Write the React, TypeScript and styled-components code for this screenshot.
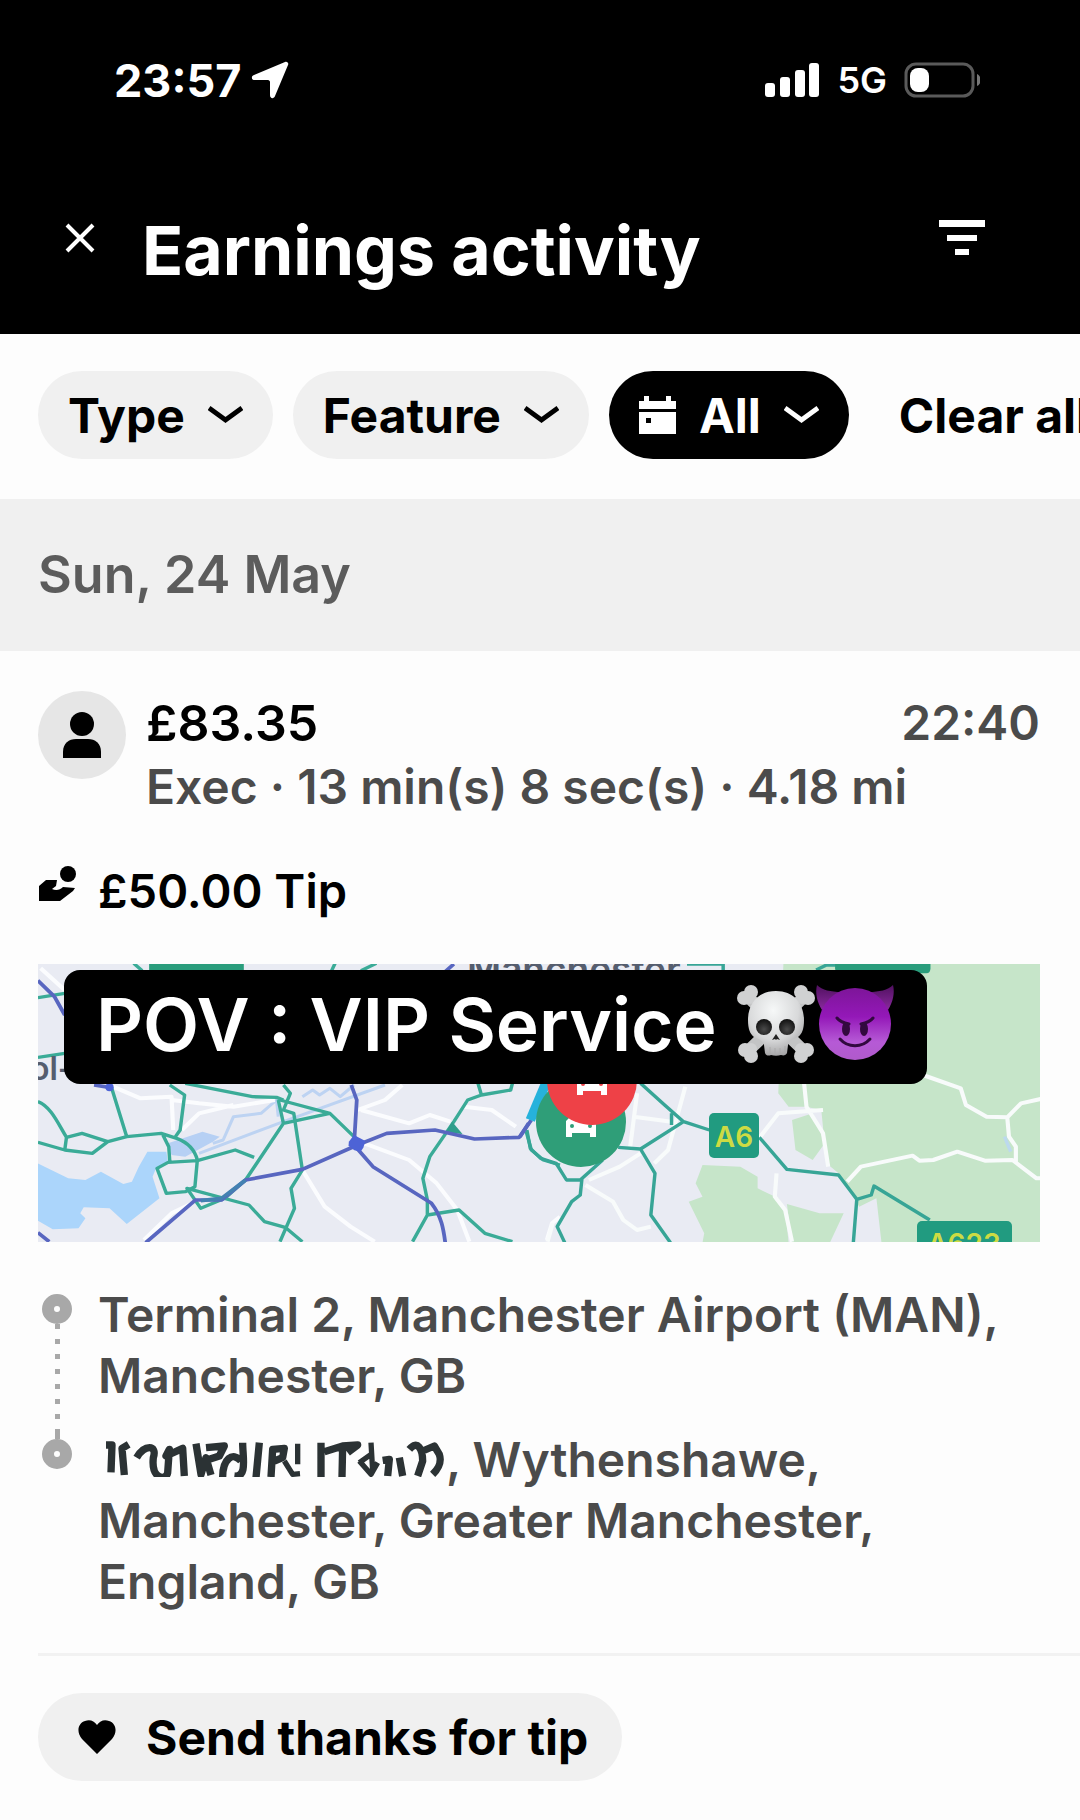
import React from "react";
import styled, { createGlobalStyle, css } from "styled-components";

const Global = createGlobalStyle`
  *, *::before, *::after { box-sizing: border-box; }
  body {
    margin: 0;
    background: #fdfdfd;
    color: #000;
    font-family: Inter, "Liberation Sans", sans-serif;
  }
  button { font: inherit; color: inherit; border: 0; margin: 0; padding: 0; background: none; cursor: pointer; }
  svg { display: block; flex: none; }
`;

const Screen = styled.div`
  min-height: 100vh;
  overflow: hidden;
`;

const Header = styled.header`
  background: #000;
  color: #fff;
`;

const StatusBar = styled.div`
  display: flex;
  align-items: center;
  justify-content: space-between;
  height: 160px;
  padding: 0 100px 0 114px;
`;

const StatusGroup = styled.div<{ $gap: number }>`
  display: flex;
  align-items: center;
  gap: ${(p) => p.$gap}px;
`;

const Clock = styled.time`
  font-size: 45px;
  font-weight: 700;
`;

const Network = styled.span`
  font-size: 36px;
  font-weight: 600;
`;

const TitleBar = styled.div`
  display: flex;
  align-items: flex-start;
  gap: 34px;
  height: 174px;
  padding: 50px 90px 0 52px;
`;

const Title = styled.h1`
  flex: 1;
  margin: 0;
  font-size: 68px;
  font-weight: 700;
  line-height: 80px;
  white-space: nowrap;
`;

const IconButton = styled.button`
  display: flex;
  align-items: center;
  justify-content: center;
  width: 56px;
  height: 56px;
`;

const Filters = styled.nav`
  display: flex;
  gap: 20px;
  padding: 37px 0 40px 38px;
  white-space: nowrap;
`;

const pill = css`
  display: flex;
  flex: none;
  align-items: center;
  height: 88px;
  padding: 0 30px;
  border-radius: 44px;
  font-size: 48px;
  font-weight: 700;
`;

const Chip = styled.button<{ $active?: boolean }>`
  && {
    ${pill}
    gap: 23px;
    background: ${(p) => (p.$active ? "#000" : "#f0f0f0")};
    color: ${(p) => (p.$active ? "#fff" : "#000")};
  }
`;

const ClearButton = styled.button`
  && {
    ${pill}
  }
`;

const DayHeading = styled.h2`
  margin: 0;
  padding: 0 38px;
  background: #f0f0f0;
  color: #5c5c5c;
  font-size: 52px;
  font-weight: 600;
  line-height: 152px;
`;

const Trip = styled.article`
  padding: 40px 40px 41px 38px;
`;

const TripRow = styled.div`
  display: flex;
  gap: 20px;
`;

const Avatar = styled.div`
  display: flex;
  flex: none;
  align-items: center;
  justify-content: center;
  width: 88px;
  height: 88px;
  border-radius: 50%;
  background: #e6e6e6;
`;

const TripText = styled.div`
  flex: 1;
  font-size: 48px;
  line-height: 64px;
  font-weight: 600;
  color: #4b4b4b;
`;

const TripTop = styled.div`
  display: flex;
  justify-content: space-between;
`;

const Fare = styled.strong`
  font-size: 50px;
  font-weight: 600;
  color: #000;
`;

const Detail = styled.p`
  margin: 0;
  white-space: nowrap;
`;

const Tip = styled.div`
  display: flex;
  align-items: flex-start;
  gap: 22px;
  margin: 40px 0 41px;
  font-size: 47px;
  font-weight: 600;
  line-height: 64px;
`;

const TipIcon = styled.span`
  display: flex;
  align-items: center;
  height: 50px;
`;

const MapFrame = styled.figure`
  position: relative;
  margin: 0 0 42px;
  svg.map { width: 100%; height: 278px; }
`;

const Caption = styled.figcaption`
  position: absolute;
  left: 26px;
  top: 6px;
  display: flex;
  align-items: center;
  height: 114px;
  padding: 0 32px 6px;
  border-radius: 16px;
  background: #000;
  color: #fff;
  font-size: 73px;
  font-weight: 600;
  white-space: nowrap;
`;

const CaptionText = styled.span`
  margin-right: 20px;
`;

const Route = styled.ol`
  list-style: none;
  margin: 0;
  padding: 0;
  color: #4b4b4b;
  font-size: 48px;
  font-weight: 600;
  line-height: 61px;
`;

const Stop = styled.li`
  display: flex;
  gap: 22px;
  &:not(:last-child) > :last-child { padding-bottom: 23px; }
`;

const Track = styled.div`
  display: flex;
  flex: none;
  flex-direction: column;
  align-items: center;
  width: 38px;
`;

const Stem = styled.div<{ $visible: boolean }>`
  width: 5px;
  height: 10px;
  background: ${(p) => (p.$visible ? "#a8a8a8" : "transparent")};
`;

const Ring = styled.div`
  width: 30px;
  height: 30px;
  border: 12px solid #a8a8a8;
  border-radius: 50%;
`;

const Dots = styled.div`
  flex: 1;
  width: 5px;
  background: repeating-linear-gradient(#a8a8a8 0 5px, transparent 5px 15px);
`;

const Address = styled.p`
  flex: 1;
  margin: 0;
`;

const Scribble = styled.svg`
  && { display: inline-block; vertical-align: baseline; }
`;

const Divider = styled.hr`
  margin: 0 0 37px 38px;
  border: 0;
  height: 3px;
  background: #f2f2f2;
`;

const ThanksButton = styled.button`
  && {
    ${pill}
    gap: 30px;
    margin: 0 38px;
    padding: 0 34px 0 40px;
    background: #f0f0f0;
  }
`;

const Chevron = () => (
  <svg width="35" height="20" viewBox="0 0 35 20" fill="none" stroke="currentColor" strokeWidth="5">
    <path d="M1 3 17.500 15 34 3" />
  </svg>
);

const SKULL_BONES = "M12 14 66 66M66 14 12 66";

function Skull() {
  return (
    <svg width="78" height="80" viewBox="0 0 78 80" role="img" aria-label="Skull and crossbones">
      <defs>
        <radialGradient id="bone" cx=".45" cy=".3" r=".75">
          <stop offset="0" stopColor="#f6f8f8" />
          <stop offset=".6" stopColor="#d8d9da" />
          <stop offset="1" stopColor="#9d9c9e" />
        </radialGradient>
        <radialGradient id="socket" cx=".5" cy=".65" r=".6">
          <stop offset="0" stopColor="#4a4a4a" />
          <stop offset="1" stopColor="#141414" />
        </radialGradient>
      </defs>
      <path d={SKULL_BONES} stroke="#c3c4c5" strokeWidth="12" />
      <g fill="#d0d1d2">
        <circle cx="7" cy="14" r="7" /><circle cx="14" cy="8" r="7" /><circle cx="13" cy="14" r="6" />
        <circle cx="71" cy="14" r="7" /><circle cx="64" cy="8" r="7" /><circle cx="65" cy="14" r="6" />
        <circle cx="8" cy="66" r="7" /><circle cx="14" cy="72" r="7" /><circle cx="14" cy="65" r="6" />
        <circle cx="70" cy="66" r="7" /><circle cx="64" cy="72" r="7" /><circle cx="64" cy="65" r="6" />
      </g>
      <path fill="url(#bone)" d="M39 7C21 7 11 20 11 36c0 9 2 14 6 17 4 2 9 3 10 8l1 8c1 3 4 3 6 2 3 1 7 1 10 0 3 1 5 0 6-2l1-8c1-5 6-6 10-8 4-3 6-8 6-17C67 20 57 7 39 7Z" />
      <path fill="none" stroke="#aaa" strokeWidth="1" d="M33 63v7M38 64v7M43 64v7M48 62v7" />
      <ellipse cx="27" cy="43" rx="8" ry="8" fill="url(#socket)" />
      <ellipse cx="50" cy="43" rx="8" ry="8" fill="url(#socket)" />
      <path fill="#222" d="m39 50 4 6-3-1-1 1-1-1-3 1Z" />
    </svg>
  );
}

function Devil() {
  return (
    <svg width="80" height="80" viewBox="0 0 80 80" role="img" aria-label="Smiling face with horns">
      <defs>
        <linearGradient id="face" x1="0" y1="0" x2="0" y2="1">
          <stop offset="0" stopColor="#7d1599" />
          <stop offset=".4" stopColor="#9418b8" />
          <stop offset=".75" stopColor="#b65ad6" />
          <stop offset="1" stopColor="#b05acb" />
        </linearGradient>
        <linearGradient id="horn" x1="0" y1="0" x2="0" y2="1">
          <stop offset="0" stopColor="#501060" />
          <stop offset="1" stopColor="#8a2a9e" />
        </linearGradient>
      </defs>
      <path fill="url(#horn)" d="M2 1c5 5 14 7 24 7L7 26C2 18 0 9 2 1ZM78 1c-5 5-14 7-24 7l19 18c5-8 7-17 5-25Z" />
      <circle cx="40" cy="40" r="36" fill="url(#face)" />
      <ellipse cx="31" cy="45" rx="4" ry="7" fill="#32093f" />
      <ellipse cx="49" cy="45" rx="4" ry="7" fill="#32093f" />
      <g fill="none" stroke="#32093f" strokeWidth="3" strokeLinecap="round">
        <path d="M22 34c3 4 7 5 12 6M58 34c-3 4-7 5-12 6" />
        <path d="M25 55c8 9 22 9 30 0" />
      </g>
    </svg>
  );
}

const Car = ({ x, y }: { x: number; y: number }) => (
  <g transform={`translate(${x} ${y})`}>
    <path fill="#fff" d="M-15 19V3L-12 0L-9-12H9L12 0L15 3V19H9V15H-9V19Z" />
    <path fill="currentColor" d="M-6-8H6L8-1H-8Z" />
    <circle cx="-9" cy="8" r="2" fill="currentColor" />
    <circle cx="9" cy="8" r="2" fill="currentColor" />
  </g>
);

function RouteMap() {
  return (
    <svg className="map" viewBox="0 0 1002 278" preserveAspectRatio="xMidYMid slice" role="img" aria-label="Trip map of south Manchester">
      <rect width="1002" height="278" fill="#e9ebf3" />
      {/* western half */}
      <g transform="matrix(.34435 0 0 .33333 -18 -14)" fill="none" strokeLinejoin="round">
        <path fill="#abd5fb" d="M52 640 140 685 190 690 235 665 300 702 325 695 345 650 370 605 425 605 430 640 395 655 385 680 405 745 310 822 260 775 185 772 175 790 190 805 170 835 95 838 52 812Z" />
        <path fill="#b6d0f4" d="M430 580 530 545 580 560 560 575 480 620 440 615Z" />
        <path stroke="#bdd3f2" strokeWidth="9" d="M560 580 590 570 620 500 700 490 745 450 750 500M520 610 765 515 1060 405M820 440 850 420 870 435 900 415 930 440 970 405" />
        <g stroke="#fbfcfe" strokeWidth="12">
          <path d="M60 55 140 130M270 410 350 445 440 440 445 540M440 450 520 460 620 470 740 450M470 540 520 490 620 465M990 480 1130 520 1190 495 1250 515M1000 580 1130 630 1210 700 1270 780 1305 875M820 660 885 770 960 830 1030 875M980 480 1060 450 1110 405M1290 470 1370 480 1440 530M360 870 440 790 500 760M1530 870 1545 820 1568 800" />
        </g>
        <g stroke="#3aab97" strokeWidth="10">
          <path d="M52 143 130 130M52 322 130 310M330 40 355 62M915 40 905 62M990 62 1035 40" />
          <path d="M52 455C90 470 110 520 135 562L180 550 255 575 210 610 130 600 52 577M135 562 130 600M255 575 310 560 410 550 455 565C495 580 510 610 515 630L508 710 480 725 425 730 398 655 430 637 515 632 625 600 680 622M265 410 310 560M435 405 478 435 465 540 450 562M415 555 432 590 435 635" />
          <path d="M480 400 675 440 745 442 765 450M755 450 900 490 975 565M765 405 785 430 765 480 795 490 820 660 787 715 797 775 755 875M750 450 765 520 655 690 595 745 525 775 485 715 665 765 710 815 770 832 820 875M765 520 900 490" />
          <path d="M1330 400 1340 435 1425 420 1430 400M1340 435 1300 450 1260 515 1230 560 1190 620 1170 685 1183 750 1183 795 1140 875M1183 795 1275 780 1350 850 1430 875M1470 545 1485 600 1520 630 1568 645" />
        </g>
        <path fill="#2f9d8b" d="M1255 515 1285 552 1235 548Z" />
        <g stroke="#5866c0" strokeWidth="11">
          <path d="M52 92 100 140 130 195M215 405 260 412M365 878 510 750 585 750 655 690 820 658 980 585 1065 550 1205 540 1320 567 1450 562 1485 510M962 405 978 450 970 585 1025 650 1195 760C1225 800 1230 840 1235 878M52 848 85 875M1235 65 1260 42" />
        </g>
        <path stroke="#4381b1" strokeWidth="11" d="M525 752 585 745 655 690" />
        <path fill="#4d63d6" d="m955 575 15-20 15 8 18 10-6 20-8 12-18-4-17-14Z" />
        <circle cx="260" cy="412" r="12" fill="#4d63d6" />
        <path fill="#2a9d7c" d="M375 40H650V62H375Z" />
      </g>
      {/* eastern half */}
      <g transform="matrix(.34435 0 0 .33333 482 -14)" fill="none" strokeLinejoin="round">
        <path fill="#c6e5c9" d="M765 40H1520V880H1050L1035 745 985 770 925 670 890 640 875 480 830 470 780 470 750 430Z" />
        <path fill="#c6e5c9" d="M530 645 640 650 690 680 690 715 750 745 770 775 780 878H530L535 850 490 755 530 740 510 700ZM775 762 870 790 940 790 900 878H790ZM790 510 850 490 885 580 850 630 800 600Z" />
        <g stroke="#f8fbfb" strokeWidth="12">
          <path d="M1170 375 1280 415 1295 465 1355 500 1415 502 1455 460 1520 445M1415 502 1420 560 1440 590 1440 635M950 695 990 650 1140 617 1160 632 1200 630 1270 605 1350 632 1430 630 1500 685 1520 685M825 400 832 470 880 550 895 650M690 570 750 490 880 480M480 410 430 600 390 640M340 430 320 590M330 500 440 515M200 690 290 650 350 610M190 705 270 755 300 810 340 840 380 830M745 670 740 740 770 780 790 875M80 875 95 820" />
        </g>
        <path stroke="#bcd9ee" strokeWidth="10" d="M1407 560 1425 605" />
        <g stroke="#37a596" strokeWidth="10">
          <path d="M350 400 420 465 475 515 550 540M440 490 440 525M475 515 350 597 285 592M350 597 392 670 380 795 437 878M20 540 30 595 60 625 105 640 135 690 175 690 240 630M180 685 175 735 150 755 108 830 130 878M695 562 775 658 925 675 978 748 968 878M978 748 1020 735 1028 708 1190 810M485 42H590V62M860 60 890 45H920" />
        </g>
        <path stroke="#5866c0" strokeWidth="11" d="M0 560 25 520" />
        <path stroke="#26b2dc" strokeWidth="28" d="M30 510 75 400" />
        <path fill="#2a9d7c" d="M915 40H1192V55Q1192 70 1180 70H930Q915 70 915 55Z" />
      </g>
      <circle cx="543" cy="158" r="45" fill="#2f9e78" />
      <g color="#2f9e78"><Car x={543} y={154} /></g>
      <circle cx="554" cy="116" r="45" fill="#ee4147" />
      <g color="#ee4147"><Car x={554} y={112} /></g>
      <rect x="671" y="149" width="50" height="45" rx="5" fill="#219b80" />
      <rect x="879" y="257" width="95" height="45" rx="5" fill="#219b80" />
      <g fontWeight="600" fontSize="28" fill="#cddb43" textAnchor="middle">
        <text x="696" y="183">A6</text>
        <text x="926" y="290">A623</text>
      </g>
      <g fill="#555d6e" fontWeight="600">
        <text x="-8" y="116" fontSize="32">ol-</text>
        <text x="429" y="18" fontSize="37">Manchester</text>
      </g>
    </svg>
  );
}

const HiddenStreet = () => (
  <Scribble width="348" height="36" viewBox="206 90 1044 108" fill="none" stroke="#2b3234" strokeWidth="22" strokeLinejoin="round" role="img" aria-label="Street name hidden">
    <path d="M230 102H248L245 184M298 100 278 112 285 192M322 140C345 100 385 100 372 140 365 205 410 210 415 185L420 115 410 135 460 112 465 195" />
    <path d="M500 98 515 190 530 140 545 192M530 110 585 105 570 135 540 145M640 95C640 140 655 200 615 195M580 198C580 145 610 120 635 150" />
    <path d="M690 95 680 200M725 198 730 115 765 112 760 140 735 150" />
    <path strokeWidth="16" d="M765 150 790 190 812 188M805 98V160M1025 95 1030 180M990 150 1025 190 1045 155M1025 130 990 155" />
    <path d="M875 95V198M885 122 940 105 985 102 955 125M940 105 938 198M1060 148 1080 145 1075 195M1110 140 1120 195M1140 115C1165 85 1180 115 1180 150L1165 195M1180 120 1215 105 1230 130C1240 160 1220 180 1210 190" />
  </Scribble>
);

export default function App() {
  return (
    <Screen>
      <Global />
      <Header>
        <StatusBar>
          <StatusGroup $gap={10}>
            <Clock>23:57</Clock>
            <svg width="38" height="38" viewBox="0 0 38 38" fill="#fff">
              <path d="M34 1c2-1 4 1 3 3L24 35c-1 3-5 3-5-1V21c0-1-1-2-2-2H4c-4 0-4-4-1-5Z" />
            </svg>
          </StatusGroup>
          <StatusGroup $gap={17}>
            <svg width="55" height="34" viewBox="0 0 55 34" fill="#fff">
              <rect y="20" width="10" height="14" rx="3" />
              <rect x="15" y="14" width="10" height="20" rx="3" />
              <rect x="30" y="7" width="10" height="27" rx="3" />
              <rect x="44" width="10" height="34" rx="3" />
            </svg>
            <Network>5G</Network>
            <svg width="76" height="36" viewBox="0 0 76 36">
              <rect x="2" y="2" width="67" height="32" rx="10" fill="none" stroke="#5a5a5a" strokeWidth="3" />
              <rect x="6" y="6" width="19" height="24" rx="8" fill="#fff" />
              <path d="M73 12c5 2 5 10 0 12Z" fill="#777" />
            </svg>
          </StatusGroup>
        </StatusBar>
        <TitleBar>
          <IconButton type="button" aria-label="Close">
            <svg width="30" height="30" viewBox="0 0 30 30" stroke="#fff" strokeWidth="4">
              <path d="m2 2 26 26M28 2 2 28" />
            </svg>
          </IconButton>
          <Title>Earnings activity</Title>
          <IconButton type="button" aria-label="Filter">
            <svg width="46" height="36" viewBox="0 0 46 36" fill="#fff">
              <path d="M0 0h46v7H0ZM8 15h30v6H8ZM16 29h14v6H16Z" />
            </svg>
          </IconButton>
        </TitleBar>
      </Header>

      <Filters aria-label="Filters">
        <Chip type="button">Type<Chevron /></Chip>
        <Chip type="button">Feature<Chevron /></Chip>
        <Chip type="button" $active>
          <svg width="37" height="38" viewBox="0 0 37 38" fill="currentColor">
            <path d="M0 5h5V0h5v5h17V0h5v5h5v8H0Z" />
            <path fillRule="evenodd" d="M0 16h37v22H0ZM7 22v5h5v-5Z" />
          </svg>
          All<Chevron />
        </Chip>
        <ClearButton type="button">Clear all</ClearButton>
      </Filters>

      <DayHeading>Sun, 24 May</DayHeading>

      <Trip>
        <TripRow>
          <Avatar>
            <svg width="38" height="46" viewBox="0 0 38 46">
              <circle cx="19" cy="12" r="12" />
              <path d="M0 46V40C0 31 6 27 13 27H25C32 27 38 31 38 40V46Z" />
            </svg>
          </Avatar>
          <TripText>
            <TripTop>
              <Fare>£83.35</Fare>
              <time>22:40</time>
            </TripTop>
            <Detail>Exec · 13 min(s) 8 sec(s) · 4.18 mi</Detail>
          </TripText>
        </TripRow>

        <Tip>
          <TipIcon>
            <svg width="38" height="36" viewBox="0 0 38 36">
              <circle cx="30" cy="8" r="8" />
              <path d="M1 35V20L8 14H19L18 20 14 23C18 25 22 24 25 21L37 22 35 25 22 35Z" />
            </svg>
          </TipIcon>
          £50.00 Tip
        </Tip>

        <MapFrame>
          <RouteMap />
          <Caption>
            <CaptionText>POV : VIP Service</CaptionText>
            <Skull />
            <Devil />
          </Caption>
        </MapFrame>

        <Route>
          <Stop>
            <Track>
              <Stem $visible={false} />
              <Ring />
              <Dots />
            </Track>
            <Address>Terminal 2, Manchester Airport (MAN), Manchester, GB</Address>
          </Stop>
          <Stop>
            <Track>
              <Stem $visible />
              <Ring />
            </Track>
            <Address><HiddenStreet />, Wythenshawe, Manchester, Greater Manchester, England, GB</Address>
          </Stop>
        </Route>
      </Trip>

      <Divider />
      <ThanksButton type="button">
        <svg width="38" height="34" viewBox="0 0 38 34">
          <path d="M19 34 4 19C-2 12 0 3 7 1c5-2 9 0 12 4 3-4 7-6 12-4 7 2 9 11 3 18Z" />
        </svg>
        Send thanks for tip
      </ThanksButton>
    </Screen>
  );
}
